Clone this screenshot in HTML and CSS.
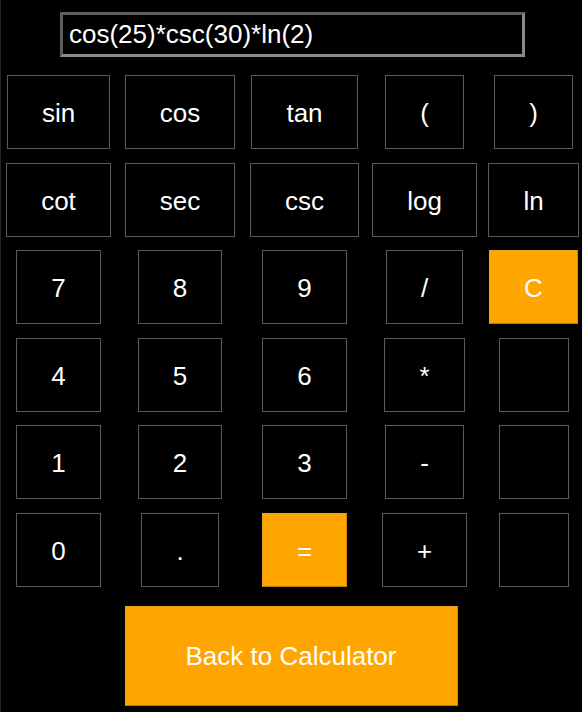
FILE: index.html
```html
<!DOCTYPE html>
<html lang="en">
<head>
<meta charset="utf-8">
<title>Scientific Calculator</title>
<link rel="stylesheet" href="styles.css">
</head>
<body>
<div class="calc">
  <input class="display" type="text" value="cos(25)*csc(30)*ln(2)">
  <div class="keys">
    <button class="key">sin</button>
    <button class="key">cos</button>
    <button class="key">tan</button>
    <button class="key">(</button>
    <button class="key">)</button>

    <button class="key">cot</button>
    <button class="key">sec</button>
    <button class="key">csc</button>
    <button class="key">log</button>
    <button class="key">ln</button>

    <button class="key">7</button>
    <button class="key">8</button>
    <button class="key">9</button>
    <button class="key">/</button>
    <button class="key key-accent">C</button>

    <button class="key">4</button>
    <button class="key">5</button>
    <button class="key">6</button>
    <button class="key">*</button>
    <button class="key"></button>

    <button class="key">1</button>
    <button class="key">2</button>
    <button class="key">3</button>
    <button class="key">-</button>
    <button class="key"></button>

    <button class="key">0</button>
    <button class="key">.</button>
    <button class="key key-accent">=</button>
    <button class="key">+</button>
    <button class="key"></button>
  </div>
  <button class="back">Back to Calculator</button>
</div>
</body>
</html>
```

FILE: styles.css
```css
html, body {
  margin: 0;
  padding: 0;
  background: #000;
}

body {
  font-family: "Liberation Sans", Arial, sans-serif;
  color: #fff;
}

.calc {
  min-height: 712px;
  box-sizing: border-box;
  display: flex;
  flex-direction: column;
  align-items: flex-start;
  box-shadow: inset 1px 0 #262626;
}

.display {
  margin: 12px 0 0 60px;
  width: 465px;
  height: 45px;
  box-sizing: border-box;
  padding: 0 6px;
  border-width: 3px;
  border-style: solid;
  border-color: #5e5e5e #8a8a8a #8a8a8a #5e5e5e;
  background: #000;
  color: #fff;
  font-family: "Liberation Sans", Arial, sans-serif;
  font-size: 26px;
  outline: none;
}

.keys {
  margin: 18px 0 0 6px;
  display: grid;
  grid-template-columns: 105px 112px 111px 103px 89px;
  grid-auto-rows: 74px;
  column-gap: 13px;
  row-gap: 13.5px;
  justify-items: center;
}

.key {
  height: 74px;
  box-sizing: border-box;
  padding: 2px 34px 0;
  border: 1px solid #5a5a5a;
  background: #000;
  color: #fff;
  font-family: "Liberation Sans", Arial, sans-serif;
  font-size: 26px;
  line-height: 1;
  cursor: pointer;
}

.key-accent {
  background: #ffa500;
  border-color: #f0a020 #d48a00 #b87700 #f0a020;
}

.back {
  align-self: center;
  margin: 19px 0 0;
  width: 333px;
  height: 100px;
  box-sizing: border-box;
  padding-top: 2px;
  border: 1px solid;
  border-color: #f0a020 #d48a00 #b87700 #f0a020;
  background: #ffa500;
  color: #fff;
  font-family: "Liberation Sans", Arial, sans-serif;
  font-size: 26px;
  cursor: pointer;
}
```
